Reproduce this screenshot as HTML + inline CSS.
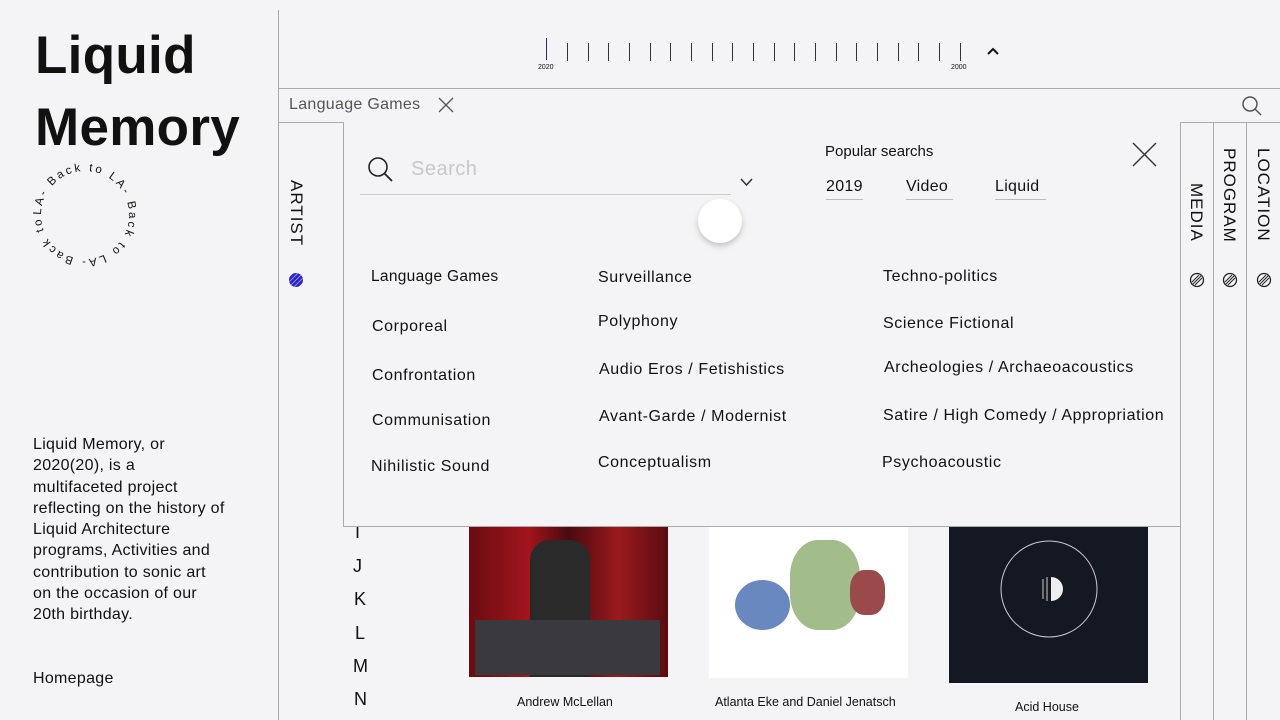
<!DOCTYPE html>
<html><head><meta charset="utf-8"><style>
*{margin:0;padding:0;box-sizing:border-box}
body{width:1280px;height:720px;overflow:hidden;background:#f4f3f5;font-family:"Liberation Sans",sans-serif;color:#111;position:relative}
.a{position:absolute}
.v{position:absolute;writing-mode:vertical-rl;font-size:17px;letter-spacing:1px;color:#111}
.t{position:absolute;font-size:16px;color:#111;letter-spacing:.6px}
.pill{position:absolute;font-size:16px;border-bottom:1px solid #bbb;padding-bottom:3px;letter-spacing:.3px}
.tick{position:absolute;top:43px;width:1px;height:18px;background:#333}
</style></head><body>
<div class="a" style="left:35px;top:20px;font-size:53px;font-weight:bold;line-height:72px;letter-spacing:0.3px">Liquid<br>Memory</div>
<svg class="a" style="left:30px;top:160px" width="110" height="110" viewBox="0 0 110 110">
<defs><path id="c" d="M55,55 m-44,0 a44,44 0 1,1 88,0 a44,44 0 1,1 -88,0"/></defs>
<text font-family="Liberation Sans" font-size="11.5" fill="#111" textLength="272" lengthAdjust="spacing"><textPath href="#c" startOffset="0" textLength="272" lengthAdjust="spacing">LA- Back to LA- Back to LA- Back to </textPath></text></svg>
<div class="a" style="left:33px;top:434px;width:192px;font-size:16px;line-height:21.3px;letter-spacing:.3px">Liquid Memory, or 2020(20), is a multifaceted project reflecting on the history of Liquid Architecture programs, Activities and contribution to sonic art on the occasion of our 20th birthday.</div>
<div class="a" style="left:33px;top:670px;font-size:16px;letter-spacing:.3px">Homepage</div>
<div class="a" style="left:278px;top:10px;width:1px;height:710px;background:#aaa"></div>
<div class="a" style="left:279px;top:88px;width:1001px;height:1px;background:#aaa"></div>
<div class="a" style="left:279px;top:122px;width:1001px;height:1px;background:#aaa"></div>
<div class="tick" style="left:546px;top:38px;height:22px;background:#2a2a8a"></div>
<div class="tick" style="left:567px"></div><div class="tick" style="left:588px"></div><div class="tick" style="left:608px"></div><div class="tick" style="left:629px"></div><div class="tick" style="left:650px"></div><div class="tick" style="left:670px"></div><div class="tick" style="left:691px"></div><div class="tick" style="left:712px"></div><div class="tick" style="left:732px"></div><div class="tick" style="left:753px"></div><div class="tick" style="left:774px"></div><div class="tick" style="left:794px"></div><div class="tick" style="left:815px"></div><div class="tick" style="left:836px"></div><div class="tick" style="left:856px"></div><div class="tick" style="left:877px"></div><div class="tick" style="left:898px"></div><div class="tick" style="left:918px"></div><div class="tick" style="left:939px"></div><div class="tick" style="left:960px"></div>
<div class="a" style="left:538px;top:64px;font-size:7px">2020</div>
<div class="a" style="left:951px;top:64px;font-size:7px">2000</div>
<svg class="a" style="left:987px;top:47px" width="12" height="8"><path d="M1 7 L6 2 L11 7" stroke="#111" stroke-width="2" fill="none"/></svg>
<div class="a" style="left:289px;top:96px;font-size:16px;color:#555;letter-spacing:.3px">Language Games</div>
<svg class="a" style="left:438px;top:97px" width="16" height="16"><path d="M1 1L15 15M15 1L1 15" stroke="#555" stroke-width="1.3"/></svg>
<svg class="a" style="left:1241px;top:95px" width="22" height="22"><circle cx="9" cy="9" r="7" stroke="#555" stroke-width="1.5" fill="none"/><path d="M14 14L20 20" stroke="#555" stroke-width="1.5"/></svg>
<div class="v" style="left:286px;top:180px">ARTIST</div>
<div class="a" style="left:289px;top:273px;width:14px;height:14px;border-radius:50%;background:repeating-linear-gradient(135deg,#2a22c8 0 2.5px,#8f8ae8 2.5px 3.5px)"></div>
<div class="a" style="left:1180px;top:122px;width:1px;height:598px;background:#aaa"></div>
<div class="a" style="left:1213px;top:122px;width:1px;height:598px;background:#aaa"></div>
<div class="a" style="left:1246px;top:122px;width:1px;height:598px;background:#aaa"></div>
<div class="v" style="left:1186px;top:183px">MEDIA</div>
<div class="v" style="left:1219px;top:148px">PROGRAM</div>
<div class="v" style="left:1253px;top:148px">LOCATION</div>
<svg class="a" style="left:1189px;top:272px" width="16" height="16"><circle cx="8" cy="8" r="6.5" stroke="#222" stroke-width="1.3" fill="none"/><path d="M4 12L12 4M6 13L13 6M3 10L10 3" stroke="#222" stroke-width="1"/></svg>
<svg class="a" style="left:1222px;top:272px" width="16" height="16"><circle cx="8" cy="8" r="6.5" stroke="#222" stroke-width="1.3" fill="none"/><path d="M4 12L12 4M6 13L13 6M3 10L10 3" stroke="#222" stroke-width="1"/></svg>
<svg class="a" style="left:1256px;top:272px" width="16" height="16"><circle cx="8" cy="8" r="6.5" stroke="#222" stroke-width="1.3" fill="none"/><path d="M4 12L12 4M6 13L13 6M3 10L10 3" stroke="#222" stroke-width="1"/></svg>
<div class="a" style="left:355px;top:522px;font-size:18px">I</div>
<div class="a" style="left:353px;top:556px;font-size:18px">J</div>
<div class="a" style="left:354px;top:589px;font-size:18px">K</div>
<div class="a" style="left:355px;top:623px;font-size:18px">L</div>
<div class="a" style="left:353px;top:656px;font-size:18px">M</div>
<div class="a" style="left:354px;top:689px;font-size:18px">N</div>
<div class="a" style="left:469px;top:527px;width:199px;height:150px;background:linear-gradient(90deg,#6a0c12,#a3141c 30%,#4a0a0e 50%,#9a1a1e 75%,#5a0c10);"></div>
<div class="a" style="left:530px;top:540px;width:60px;height:137px;background:#2a2a2a;border-radius:20px 20px 0 0"></div>
<div class="a" style="left:475px;top:620px;width:185px;height:55px;background:#3a3a3e"></div>
<div class="a" style="left:709px;top:527px;width:199px;height:151px;background:#fff"></div>
<div class="a" style="left:735px;top:580px;width:55px;height:50px;border-radius:50%;background:#6a88c0"></div>
<div class="a" style="left:790px;top:540px;width:70px;height:90px;background:#7aa05a;border-radius:40%;opacity:.7"></div>
<div class="a" style="left:850px;top:570px;width:35px;height:45px;background:#9a4a4a;border-radius:40%"></div>
<div class="a" style="left:949px;top:527px;width:199px;height:156px;background:#141822"></div>
<svg class="a" style="left:949px;top:527px" width="199" height="156"><circle cx="100" cy="62" r="48" stroke="#ccc" fill="none"/><path d="M102 50a12 12 0 0 1 0 24z" fill="#eee"/><path d="M94 52v20M98 50v24" stroke="#ccc"/></svg>
<div class="a" style="left:517px;top:695px;font-size:12.5px">Andrew McLellan</div>
<div class="a" style="left:715px;top:695px;font-size:12.5px">Atlanta Eke and Daniel Jenatsch</div>
<div class="a" style="left:1015px;top:700px;font-size:12.5px">Acid House</div>
<div class="a" style="left:343px;top:122px;width:837px;height:405px;background:#f4f3f5;border-left:1px solid #aaa;border-bottom:1px solid #aaa"></div>
<svg class="a" style="left:366px;top:155px" width="30" height="30"><circle cx="12" cy="12" r="9" stroke="#222" stroke-width="1.6" fill="none"/><path d="M18.5 18.5L26 26" stroke="#222" stroke-width="1.8"/></svg>
<div class="a" style="left:411px;top:158px;font-size:20px;color:#c8c8cc;letter-spacing:.5px">Search</div>
<div class="a" style="left:360px;top:194px;width:371px;height:1px;background:#ccc"></div>
<svg class="a" style="left:740px;top:178px" width="13" height="9"><path d="M1 1L6.5 7L12 1" stroke="#333" stroke-width="1.5" fill="none"/></svg>
<div class="a" style="left:698px;top:199px;width:44px;height:44px;border-radius:50%;background:#fff;box-shadow:0 3px 6px rgba(0,0,0,.2)"></div>
<div class="a" style="left:825px;top:143px;font-size:15px">Popular searchs</div>
<div class="pill" style="left:826px;top:178px">2019</div>
<div class="pill" style="left:906px;top:178px;padding-right:5px">Video</div>
<div class="pill" style="left:995px;top:178px;padding-right:6px">Liquid</div>
<svg class="a" style="left:1132px;top:142px" width="25" height="25"><path d="M1 1L24 24M24 1L1 24" stroke="#333" stroke-width="1.4"/></svg>
<div class="t" style="left:371px;top:268px;font-size:15.5px;letter-spacing:.3px">Language Games</div>
<div class="t" style="left:372px;top:318px">Corporeal</div>
<div class="t" style="left:372px;top:367px">Confrontation</div>
<div class="t" style="left:372px;top:412px">Communisation</div>
<div class="t" style="left:371px;top:458px">Nihilistic Sound</div>
<div class="t" style="left:598px;top:269px">Surveillance</div>
<div class="t" style="left:598px;top:313px">Polyphony</div>
<div class="t" style="left:599px;top:361px">Audio Eros / Fetishistics</div>
<div class="t" style="left:599px;top:408px">Avant-Garde / Modernist</div>
<div class="t" style="left:598px;top:454px">Conceptualism</div>
<div class="t" style="left:883px;top:268px">Techno-politics</div>
<div class="t" style="left:883px;top:315px">Science Fictional</div>
<div class="t" style="left:884px;top:359px">Archeologies / Archaeoacoustics</div>
<div class="t" style="left:883px;top:407px">Satire / High Comedy / Appropriation</div>
<div class="t" style="left:882px;top:454px">Psychoacoustic</div>
</body></html>
